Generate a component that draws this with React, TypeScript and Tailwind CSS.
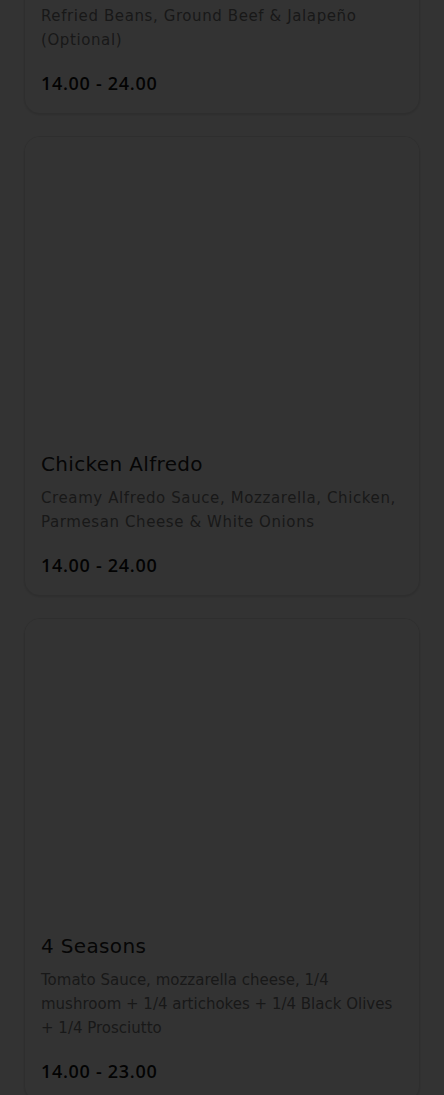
type Pizza = {
  name: string;
  description: string;
  price: string;
  tight?: boolean;
};

const pizzas: Pizza[] = [
  {
    name: "Mexican",
    description:
      "Tomato Sauce, Mozzarella, Onions, Peppers, Refried Beans, Ground Beef & Jalapeño (Optional)",
    price: "14.00 - 24.00",
  },
  {
    name: "Chicken Alfredo",
    description:
      "Creamy Alfredo Sauce, Mozzarella, Chicken, Parmesan Cheese & White Onions",
    price: "14.00 - 24.00",
  },
  {
    name: "4 Seasons",
    description:
      "Tomato Sauce, mozzarella cheese, 1/4 mushroom + 1/4 artichokes + 1/4 Black Olives + 1/4 Prosciutto",
    price: "14.00 - 23.00",
    tight: true,
  },
];

function PizzaCard({ pizza }: { pizza: Pizza }) {
  return (
    <div className="overflow-hidden rounded-2xl border border-[#e6e6e6] bg-white shadow-sm">
      {/* image placeholder (not loaded) */}
      <div className="h-[297px] w-full bg-white" />
      <div className="px-4 pt-4 pb-[18px]">
        <h3 className="text-[20px] leading-7 tracking-[0.35px] text-[#222]">{pizza.name}</h3>
        <p
          className={
            pizza.tight
              ? "mt-2 text-[15px] leading-6 tracking-normal text-[#7a7a7a]"
              : "mt-2 text-[15px] leading-6 tracking-[0.6px] text-[#7a7a7a]"
          }
        >
          {pizza.description}
        </p>
        <p
          className="mt-[19px] text-[18px] leading-6 font-semibold tracking-[0.7px] text-[#111]"
          style={{ fontFamily: '"Open Sans", sans-serif' }}
        >
          {pizza.price}
        </p>
      </div>
    </div>
  );
}

export default function App() {
  return (
    <div
      className="relative h-[1095px] overflow-hidden bg-white"
      style={{ fontFamily: '"DejaVu Sans", "Open Sans", sans-serif' }}
    >
      <div className="-mt-[370px] flex flex-col gap-[22px] px-6">
        {pizzas.map((p) => (
          <PizzaCard key={p.name} pizza={p} />
        ))}
      </div>

      {/* Modal backdrop */}
      <div className="absolute inset-0 bg-black/80" />
    </div>
  );
}
